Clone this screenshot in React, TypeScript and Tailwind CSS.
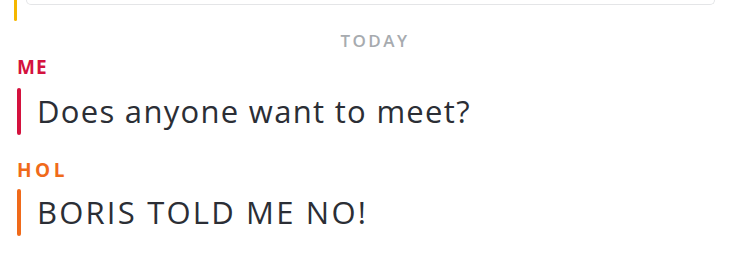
export default function App() {
  return (
    <div
      className="w-[750px] h-[259px] bg-white overflow-hidden"
      style={{ fontFamily: "'Open Sans', Lato, sans-serif" }}
    >
      {/* previous message tail */}
      <div className="flex items-start h-[21px]">
        <div className="ml-[14px] w-[3px] h-[21px] rounded-b-full bg-[#f5b700]" />
        <div className="ml-[9px] w-[689px] h-[5px] border border-t-0 border-[#e4e5e7] rounded-b-[10px]" />
      </div>

      <div className="mt-[11px] text-center text-[17px] leading-[17px] font-semibold tracking-[2.5px] text-[#a7abaf]">
        TODAY
      </div>

      <div className="mt-[8px] pl-[17px]">
        <div className="text-[19px] leading-[20px] font-bold tracking-[1.2px] text-[#d4123e]">ME</div>
        <div className="mt-[11px] flex items-stretch">
          <div className="w-[4px] h-[47px] rounded-full bg-[#d4123e]" />
          <div className="pl-[16px] text-[31px] leading-[47px] tracking-[1.3px] text-[#2b2e35]">Does anyone want to meet?</div>
        </div>
      </div>

      <div className="mt-[25px] pl-[17px]">
        <div className="text-[19px] leading-[20px] font-bold tracking-[3.5px] text-[#f06a1a]">HOL</div>
        <div className="mt-[9px] flex items-stretch">
          <div className="w-[4px] h-[47px] rounded-full bg-[#f06a1a]" />
          <div className="pl-[16px] text-[31px] leading-[47px] tracking-[2.2px] text-[#2b2e35]">BORIS TOLD ME NO!</div>
        </div>
      </div>
    </div>
  );
}
